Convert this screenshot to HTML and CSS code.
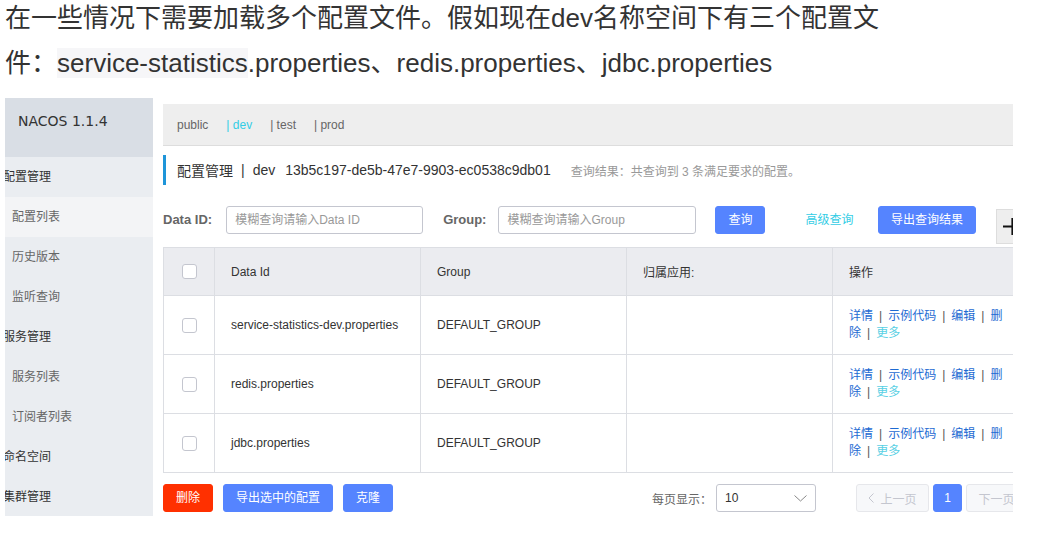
FILE: index.html
```html
<!DOCTYPE html>
<html lang="zh-CN">
<head>
<meta charset="utf-8">
<title>Nacos 配置列表</title>
<link rel="stylesheet" href="styles.css">
</head>
<body>
<p class="intro">在一些情况下需要加载多个配置文件。假如现在dev名称空间下有三个配置文件：<span class="hl">service-statistics</span>.properties、redis.properties、jdbc.properties</p>
<div class="shot">
  <aside class="sidebar">
    <div class="logo">NACOS 1.1.4</div>
    <div class="nav-group">配置管理</div>
    <div class="nav-item active">配置列表</div>
    <div class="nav-item">历史版本</div>
    <div class="nav-item">监听查询</div>
    <div class="nav-group">服务管理</div>
    <div class="nav-item">服务列表</div>
    <div class="nav-item">订阅者列表</div>
    <div class="nav-group">命名空间</div>
    <div class="nav-group">集群管理</div>
  </aside>
  <main class="main">
    <div class="inner">
      <div class="ns-bar">
        <span class="ns">public</span>
        <span class="ns cur">|&nbsp;dev</span>
        <span class="ns">|&nbsp;test</span>
        <span class="ns">|&nbsp;prod</span>
      </div>
      <div class="title">
        <span>配置管理</span><span class="title-sep">|</span><span>dev</span><span class="ns-id">13b5c197-de5b-47e7-9903-ec0538c9db01</span><span class="result">查询结果：共查询到 3 条满足要求的配置。</span>
      </div>
      <div class="search">
        <span class="label">Data ID:</span>
        <div class="input input-dataid">模糊查询请输入Data ID</div>
        <span class="label label-group">Group:</span>
        <div class="input input-group">模糊查询请输入Group</div>
        <button class="btn btn-query">查询</button>
        <span class="adv">高级查询</span>
        <button class="btn btn-export">导出查询结果</button>
        <div class="plus">
          <svg width="33" height="35" viewBox="0 0 33 35"><path d="M7 17.5H26M16.5 9V26" stroke="#111" stroke-width="2.2" fill="none"/></svg>
        </div>
      </div>
      <table class="table">
        <colgroup>
          <col class="c-check"><col class="c-id"><col class="c-group"><col class="c-app"><col class="c-ops">
        </colgroup>
        <thead>
          <tr>
            <th class="check"><span class="cb"></span></th>
            <th>Data Id</th>
            <th>Group</th>
            <th>归属应用:</th>
            <th>操作</th>
          </tr>
        </thead>
        <tbody>
          <tr>
            <td class="check"><span class="cb"></span></td>
            <td>service-statistics-dev.properties</td>
            <td>DEFAULT_GROUP</td>
            <td></td>
            <td><div class="ops"><a>详情</a><span class="sep">|</span><a>示例代码</a><span class="sep">|</span><a>编辑</a><span class="sep">|</span><a>删除</a><span class="sep">|</span><a class="more">更多</a></div></td>
          </tr>
          <tr>
            <td class="check"><span class="cb"></span></td>
            <td>redis.properties</td>
            <td>DEFAULT_GROUP</td>
            <td></td>
            <td><div class="ops"><a>详情</a><span class="sep">|</span><a>示例代码</a><span class="sep">|</span><a>编辑</a><span class="sep">|</span><a>删除</a><span class="sep">|</span><a class="more">更多</a></div></td>
          </tr>
          <tr>
            <td class="check"><span class="cb"></span></td>
            <td>jdbc.properties</td>
            <td>DEFAULT_GROUP</td>
            <td></td>
            <td><div class="ops"><a>详情</a><span class="sep">|</span><a>示例代码</a><span class="sep">|</span><a>编辑</a><span class="sep">|</span><a>删除</a><span class="sep">|</span><a class="more">更多</a></div></td>
          </tr>
        </tbody>
      </table>
      <div class="footer">
        <div class="actions">
          <button class="btn btn-danger">删除</button>
          <button class="btn">导出选中的配置</button>
          <button class="btn">克隆</button>
        </div>
        <div class="paging">
          <span class="per-page">每页显示：</span>
          <div class="select"><span>10</span>
            <svg width="13" height="7" viewBox="0 0 13 7"><path d="M0.5 0.5L6.5 6L12.5 0.5" stroke="#888" stroke-width="1" fill="none"/></svg>
          </div>
          <div class="pager">
            <div class="pg"><svg width="6" height="10" viewBox="0 0 6 10"><path d="M5.5 0.5L1 5L5.5 9.5" stroke="#c4c6cf" stroke-width="1" fill="none"/></svg><span>上一页</span></div>
            <div class="pg cur">1</div>
            <div class="pg"><span>下一页</span><svg width="6" height="10" viewBox="0 0 6 10"><path d="M0.5 0.5L5 5L0.5 9.5" stroke="#c4c6cf" stroke-width="1" fill="none"/></svg></div>
          </div>
        </div>
      </div>
    </div>
  </main>
</div>
</body>
</html>
```

FILE: styles.css
```css
* { box-sizing: border-box; }

body {
  margin: 0;
  background: #fff;
  color: #333;
  font-family: "Liberation Sans", "Noto Sans CJK SC", sans-serif;
}

.intro {
  margin: -4px 0 0 5px;
  width: 885px;
  font-size: 26px;
  line-height: 45px;
  color: #333;
}

.hl { background: #f6f6f8; }

.shot {
  margin: 12px 0 0 5px;
  width: 1008px;
  height: 418px;
  display: flex;
  overflow: hidden;
}

/* sidebar */
.sidebar {
  width: 148px;
  flex: none;
  background: #eaedf1;
  overflow: hidden;
  font-size: 12px;
}

.logo {
  height: 59px;
  background: #d9dee5;
  padding: 15px 0 0 13px;
  font-family: "DejaVu Sans", sans-serif;
  font-size: 14px;
  line-height: 17px;
  color: #333;
}

.nav-group {
  height: 40px;
  line-height: 40px;
  margin-left: -2px;
  color: #333;
}

.nav-item {
  height: 40px;
  line-height: 40px;
  padding-left: 7px;
  color: #666;
}

.nav-item.active { background: #f3f4f6; }

/* main */
.main {
  flex: 1;
  min-width: 0;
  padding: 6px 0 0 10px;
  overflow: hidden;
}

.inner { width: 876px; }

.ns-bar {
  height: 42px;
  background: #eee;
  border-bottom: 1px solid #ddd;
  padding-left: 14px;
  display: flex;
  align-items: center;
  font-size: 12px;
  color: #666;
}

.ns + .ns { margin-left: 18px; }
.ns.cur { color: #33cde5; }

.title {
  margin-top: 9px;
  height: 30px;
  border-left: 3px solid #1e95d9;
  padding-left: 11px;
  display: flex;
  align-items: center;
  font-size: 14px;
  color: #333;
  white-space: nowrap;
}

.title-sep { margin: 0 8px; }
.ns-id { margin-left: 10px; }
.result { margin-left: 20px; font-size: 12px; color: #999; }

/* search row */
.search {
  margin-top: 21px;
  display: flex;
  align-items: flex-start;
  white-space: nowrap;
}

.label {
  font-size: 13px;
  font-weight: bold;
  line-height: 28px;
  color: #666;
}

.label-group { margin-left: 20px; }

.input {
  height: 28px;
  border: 1px solid #c4c6cf;
  border-radius: 3px;
  padding-left: 8px;
  font-size: 12px;
  line-height: 26px;
  color: #999;
}

.input-dataid { width: 197px; margin-left: 14px; }
.input-group { width: 198px; margin-left: 12px; }

.btn {
  height: 28px;
  padding: 0 12px;
  border: 1px solid #5584ff;
  border-radius: 3px;
  background: #5584ff;
  color: #fff;
  font-family: inherit;
  font-size: 12px;
  line-height: 26px;
  white-space: nowrap;
}

.btn-danger { background: #ff3000; border-color: #ff3000; }
.btn-query { margin-left: 19px; }
.btn-export { margin-left: 25px; padding: 0 11.5px; }

.adv {
  margin-left: 40px;
  font-size: 12px;
  line-height: 28px;
  color: #33cde5;
}

.plus {
  flex: none;
  margin: 3px 0 0 20px;
  width: 33px;
  height: 35px;
  background: #eee;
  border: 1px solid #ddd;
  display: flex;
  align-items: center;
  justify-content: center;
}

.plus svg { display: block; flex: none; }

/* table */
.table {
  margin-top: 3px;
  width: 876px;
  border-collapse: collapse;
  table-layout: fixed;
  font-size: 12px;
  color: #333;
}

.c-check { width: 51px; }
.c-id, .c-group, .c-app { width: 206px; }
.c-ops { width: 207px; }

.table th,
.table td {
  border: 1px solid #dcdee3;
  padding: 0 16px;
  text-align: left;
  font-weight: normal;
  vertical-align: middle;
  white-space: nowrap;
}

.table thead th {
  background: #ebecf0;
  height: 48px;
}

.table td { height: 59px; }

.table .check { text-align: center; padding: 0; }

.cb {
  display: inline-block;
  width: 15px;
  height: 15px;
  border: 1px solid #c4c6cf;
  border-radius: 3px;
  background: #fff;
  vertical-align: middle;
}

.table td .ops {
  max-width: 156px;
  white-space: normal;
  line-height: 17px;
}

.ops a { color: #1d6ad2; }
.ops a.more { color: #59d0e4; }
.ops .sep { margin: 0 6px; color: #555; }

/* footer */
.footer {
  margin-top: 11px;
  display: flex;
  align-items: center;
  justify-content: space-between;
}

.actions { display: flex; gap: 10px; }

.paging {
  display: flex;
  align-items: center;
  font-size: 12px;
  color: #666;
}

.select {
  margin-left: 4px;
  width: 100px;
  height: 28px;
  border: 1px solid #c4c6cf;
  border-radius: 3px;
  padding: 0 8px;
  display: flex;
  align-items: center;
  justify-content: space-between;
  color: #333;
}

.pager {
  margin-left: 40px;
  display: flex;
  gap: 4px;
}

.pg {
  width: 73px;
  height: 28px;
  border: 1px solid #e6e7eb;
  border-radius: 3px;
  background: #f7f8fa;
  color: #c4c6cf;
  display: flex;
  align-items: center;
  justify-content: center;
  gap: 6px;
}

.pg.cur {
  width: 29px;
  background: #5584ff;
  border-color: #5584ff;
  color: #fff;
}
```
